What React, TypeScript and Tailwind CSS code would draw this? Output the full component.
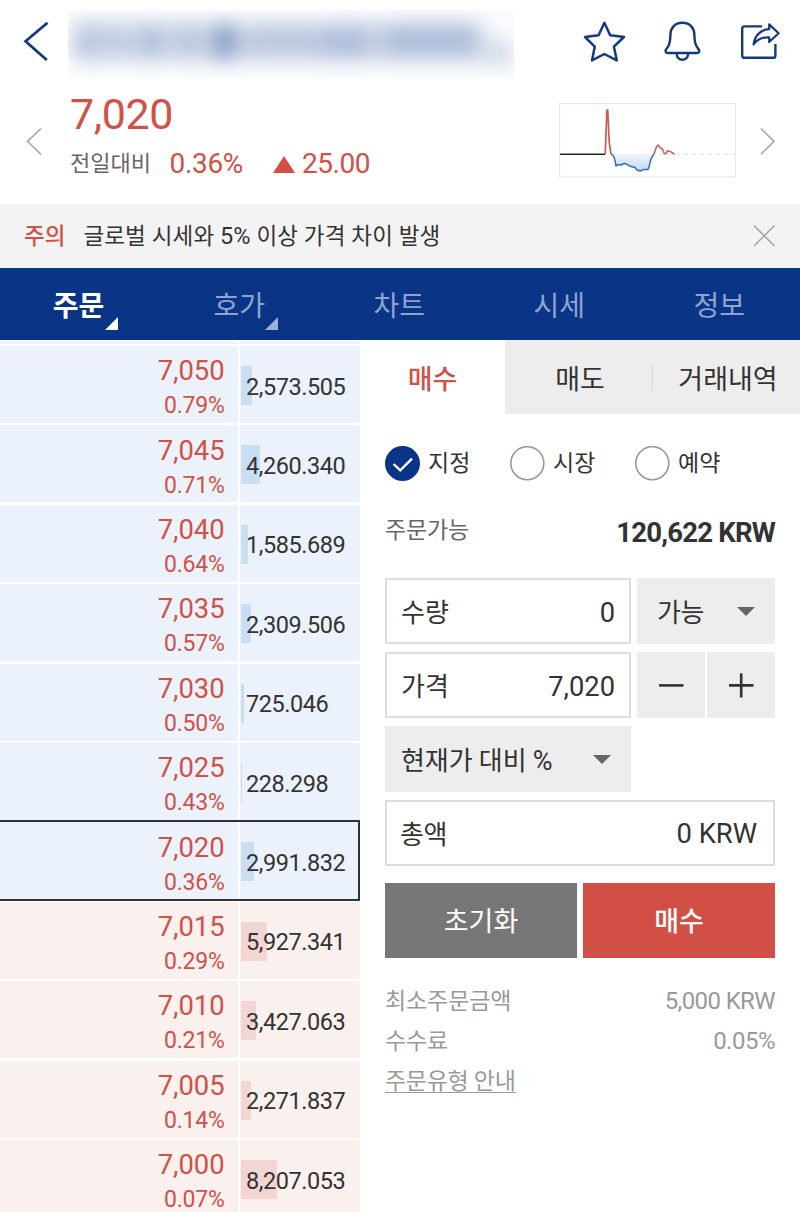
import clsx from 'clsx';

type Side = 'ask' | 'bid';

interface OrderRow {
  price: string;
  rate: string;
  qty: string;
  side: Side;
  current?: boolean;
}

const orderBook: OrderRow[] = [
  { price: '7,050', rate: '0.79%', qty: '2,573.505', side: 'ask' },
  { price: '7,045', rate: '0.71%', qty: '4,260.340', side: 'ask' },
  { price: '7,040', rate: '0.64%', qty: '1,585.689', side: 'ask' },
  { price: '7,035', rate: '0.57%', qty: '2,309.506', side: 'ask' },
  { price: '7,030', rate: '0.50%', qty: '725.046', side: 'ask' },
  { price: '7,025', rate: '0.43%', qty: '228.298', side: 'ask' },
  { price: '7,020', rate: '0.36%', qty: '2,991.832', side: 'ask', current: true },
  { price: '7,015', rate: '0.29%', qty: '5,927.341', side: 'bid' },
  { price: '7,010', rate: '0.21%', qty: '3,427.063', side: 'bid' },
  { price: '7,005', rate: '0.14%', qty: '2,271.837', side: 'bid' },
  { price: '7,000', rate: '0.07%', qty: '8,207.053', side: 'bid' },
];

const navTabs = [
  { label: '주문', hasMenu: true },
  { label: '호가', hasMenu: true },
  { label: '차트', hasMenu: false },
  { label: '시세', hasMenu: false },
  { label: '정보', hasMenu: false },
];

const orderTypes = ['지정', '시장', '예약'];

// Coin name is masked
function MaskedTitle() {
  return (
    <svg width="446" height="68" viewBox="68 10 446 68" className="block">
      <defs>
        <filter id="mask-blur" x="-20%" y="-80%" width="140%" height="260%">
          <feGaussianBlur stdDeviation="9.5" />
        </filter>
      </defs>
      <rect x="68" y="10" width="446" height="68" fill="#fcfcfe" />
      <g filter="url(#mask-blur)">
        <rect x="72" y="22" width="412" height="39" fill="#cad4e6" />
        <rect x="78" y="25" width="20" height="33" fill="#b8c6de" />
        <rect x="108" y="25" width="16" height="31" fill="#becbe1" />
        <rect x="141" y="25" width="20" height="33" fill="#aebfda" />
        <rect x="181" y="25" width="16" height="33" fill="#b3c3dc" />
        <rect x="213" y="24" width="23" height="36" fill="#86a0c9" />
        <rect x="250" y="27" width="70" height="29" fill="#bbc8df" />
        <rect x="322" y="25" width="46" height="33" fill="#b1bfdb" />
        <rect x="385" y="25" width="90" height="31" fill="#aebdd9" />
        <rect x="486" y="40" width="26" height="26" fill="#d3dbea" />
      </g>
    </svg>
  );
}

function StarIcon() {
  return (
    <svg width="44" height="44" viewBox="582 20 44 44" fill="none" stroke="#15397f" strokeWidth="2.5" strokeLinejoin="round">
      <path d="M604.4 22.8 L610.2 35.2 L624 37 L613.9 46.6 L616.8 60.4 L604.4 54 L592 60.4 L594.8 46.6 L585 37 L598.6 35.2 Z" />
    </svg>
  );
}

function BellIcon() {
  return (
    <svg width="40" height="44" viewBox="662 20 40 44" fill="none" stroke="#15397f" strokeWidth="2.4" strokeLinejoin="round">
      <path d="M682.4 22.8 C674.6 22.8 670.4 28.4 670.4 35 C670.4 42.4 669.6 45.4 666.6 48.6 C664.8 50.6 665.4 53 668 53 H696.8 C699.4 53 700 50.6 698.2 48.6 C695.2 45.4 694.4 42.4 694.4 35 C694.4 28.4 690.2 22.8 682.4 22.8 Z" />
      <path d="M676.6 53.4 C676.8 57.4 679.2 59.8 682.4 59.8 C685.6 59.8 688 57.4 688.2 53.4" />
    </svg>
  );
}

function ShareIcon() {
  return (
    <svg width="44" height="44" viewBox="738 20 44 44" fill="none" stroke="#15397f" strokeWidth="2.4" strokeLinejoin="round">
      <path d="M762 26.4 H744.6 Q742.2 26.4 742.2 28.8 V55.4 Q742.2 57.8 744.6 57.8 H773 Q775.4 57.8 775.4 55.4 V44" />
      <path strokeWidth="2.2" d="M769.2 24.4 L778.6 33.3 L769.2 42 V37.4 C762.6 37 757.2 39.2 753.6 44.4 C754.8 35.6 760.6 29.6 769.2 29.2 Z" />
    </svg>
  );
}

function Header() {
  return (
    <header className="flex h-[84px] items-start justify-between pl-[23px] pr-[18px]">
      <div className="flex">
        <svg width="45" height="84" viewBox="23 0 45 84" fill="none" stroke="#15397f" strokeWidth="2.8">
          <path d="M47.5 22.8 L25.6 41.2 L46.8 60" />
        </svg>
        <div className="pt-[10px]">
          <MaskedTitle />
        </div>
      </div>
      <div className="flex pt-5">
        <StarIcon />
        <div className="w-9" />
        <BellIcon />
        <div className="w-9" />
        <ShareIcon />
      </div>
    </header>
  );
}

function MiniChart() {
  return (
    <svg width="178" height="76" viewBox="558 102 178 76" fill="none">
      <defs>
        <linearGradient id="dip" x1="0" y1="0" x2="0" y2="1">
          <stop offset="0" stopColor="#eff4fb" />
          <stop offset="1" stopColor="#c3d8f0" />
        </linearGradient>
      </defs>
      <rect x="559.5" y="103.5" width="176" height="73.5" fill="#fff" stroke="#e8e8e8" strokeWidth="1.2" />
      <path d="M612 154.3 H735" stroke="#e6e6e6" strokeWidth="1.2" strokeDasharray="4 4" />
      <path
        d="M611 154.3 C614 154.5 614.6 158 616 166 L618 164.6 L621 165 L624 163.3 L627 164.4 L631 166.6 L635 167.4 L637 170 L640 171 L644 169.4 L648 169.4 L650 163 L654 154.3 Z"
        fill="url(#dip)"
      />
      <path d="M560 154.3 H605" stroke="#222" strokeWidth="1.5" />
      <path d="M605.2 154.3 L606.9 110 H607.7 L609.2 142 L611 154.3" stroke="#cc5b51" strokeWidth="1.7" strokeLinejoin="round" />
      <path
        d="M611 154.3 C614 154.5 614.6 158 616 166 L618 164.6 L621 165 L624 163.3 L627 164.4 L631 166.6 L635 167.4 L637 170 L640 171 L644 169.4 L648 169.4 C650 167 649.6 158 654 154.3"
        stroke="#2f6cb8"
        strokeWidth="1.5"
        strokeLinejoin="round"
      />
      <path
        d="M654 154.3 L656.6 146.6 L658.2 145 L660 147.6 L662.4 149 L664.4 153.8 L666 153.4 L667.6 150.8 L670.6 151.6 L674.6 154.3"
        stroke="#cc5b51"
        strokeWidth="1.5"
        strokeLinejoin="round"
      />
    </svg>
  );
}

function PriceSummary() {
  return (
    <section className="flex h-[120px] items-start pl-[26px] pr-6">
      <svg width="16" height="30" viewBox="26 126 16 30" fill="none" stroke="#a9a9a9" strokeWidth="1.6" className="mt-[42px]">
        <path d="M41 128.5 L27.5 141.3 L41 154.3" />
      </svg>
      <div className="ml-7 flex-1 text-[#d05147]">
        <div className="mt-[5px] text-[43px] leading-[50px] tracking-[-0.4px]">7,020</div>
        <div className="mt-[9px] flex items-center leading-8">
          <span className="text-[22px] text-[#666]">전일대비</span>
          <span className="ml-[18.5px] text-[28px] tracking-[-0.3px]">0.36%</span>
          <span className="ml-[30px] h-0 w-0 border-x-[11.5px] border-b-[17px] border-x-transparent border-b-[#d24f45]" />
          <span className="ml-[7px] text-[28px] tracking-[-0.5px]">25.00</span>
        </div>
      </div>
      <div className="mt-[18px]">
        <MiniChart />
      </div>
      <svg width="16" height="30" viewBox="759 126 16 30" fill="none" stroke="#a9a9a9" strokeWidth="1.6" className="ml-6 mt-[42px]">
        <path d="M759.8 128.5 L773.1 141.3 L759.8 154.3" />
      </svg>
    </section>
  );
}

function Notice() {
  return (
    <div className="flex h-16 items-center bg-[#f3f3f3] pl-6 pr-6 text-[22.5px] text-[#333]">
      <span className="pt-[2px] font-medium text-[#d05147]">주의</span>
      <span className="ml-[18px] flex-1 pt-[2px] tracking-[0.15px]">
        글로벌 시세와 <span className="text-[23.5px]">5%</span> 이상 가격 차이 발생
      </span>
      <svg width="24" height="24" viewBox="0 0 24 24" fill="none" stroke="#a0a0a0" strokeWidth="1.4">
        <path d="M2 1.5 L22.5 22 M22.5 1.5 L2 22" />
      </svg>
    </div>
  );
}

function NavTabs() {
  return (
    <nav className="grid h-[72px] grid-cols-5 bg-[#0a3586] text-[28px]">
      {navTabs.map((tab, i) => (
        <button
          key={tab.label}
          className={clsx('relative pt-[5px]', i === 0 ? 'pr-[3px] font-bold text-white' : 'pr-[1.5px] text-[#8fa3d0]')}
        >
          {tab.label}
          {tab.hasMenu && (
            <svg width="13" height="13" viewBox="0 0 13 13" className="absolute left-[105px] top-[49px]">
              <path d="M13 0 V13 H0 Z" fill={i === 0 ? '#fff' : '#9db0d9'} />
            </svg>
          )}
        </button>
      ))}
    </nav>
  );
}

function OrderBookRow({ row }: { row: OrderRow }) {
  const cell = row.side === 'ask' ? 'bg-[#ebf2fb]' : 'bg-[#faf0ee]';
  const bar = row.side === 'ask' ? 'bg-[#c9def1]' : 'bg-[#f3d6d3]';
  const barWidth = parseFloat(row.qty.replace(',', '')) / 226;

  return (
    <div className="relative flex h-[77.1px] shrink-0 gap-[2px]">
      <div className={clsx('flex w-[238px] flex-col items-end pr-[13.4px] pt-[8.3px] text-[#d05147]', cell)}>
        <span className="text-[27.4px] leading-[35px]">{row.price}</span>
        <span className="text-[23px] leading-[34px] tracking-[-0.2px]">{row.rate}</span>
      </div>
      <div className={clsx('relative flex flex-1 items-center pl-[6px] pt-[5.4px]', cell)}>
        <div className={clsx('absolute left-[1px] top-5 h-[39px]', bar)} style={{ width: barWidth }} />
        <span className="relative text-[23.5px] tracking-[-0.45px] text-[#333]">{row.qty}</span>
      </div>
      {row.current && (
        <div className="absolute inset-x-0 -bottom-[2px] -top-[2px] border-y-2 border-r-2 border-[#2f3337]" />
      )}
    </div>
  );
}

function OrderBook() {
  return (
    <div className="flex w-[360px] shrink-0 flex-col gap-[2.3px] overflow-hidden pt-[2px]">
      <div className="flex h-[1.7px] shrink-0 gap-[2px]">
        <div className="w-[238px] bg-[#ebf2fb]" />
        <div className="flex-1 bg-[#ebf2fb]" />
      </div>
      {orderBook.map((row) => (
        <OrderBookRow key={row.price} row={row} />
      ))}
    </div>
  );
}

function Caret() {
  return <span className="h-0 w-0 border-x-[9.5px] border-t-[9.5px] border-x-transparent border-t-[#666]" />;
}

function OrderForm() {
  return (
    <div className="flex-1">
      <div className="flex h-[74px] text-[27px] text-[#333]">
        <button className="w-[145px] pt-[6px] font-medium text-[#d05147]">매수</button>
        <div className="flex flex-1 items-center bg-[#ededed]">
          <button className="flex-1 pl-[3px] pt-[6px]">매도</button>
          <div className="h-7 w-px bg-[#d8d8d8]" />
          <button className="flex-1 pl-[3px] pt-[6px]">거래내역</button>
        </div>
      </div>

      <div className="px-[25px] text-[#333]">
        <div className="mt-[31px] flex h-9 items-center">
          {orderTypes.map((type, i) => (
            <label key={type} className="flex w-[125px] items-center gap-[8px] text-[23px]">
              {i === 0 ? (
                <svg width="35" height="35" viewBox="0 0 35 35" fill="none">
                  <circle cx="17.5" cy="17.5" r="17.5" fill="#0a3586" />
                  <path d="M8.6 18 L15.2 24.4 L27 12.6" stroke="#fff" strokeWidth="2.4" />
                </svg>
              ) : (
                <svg width="35" height="35" viewBox="0 0 35 35" fill="none">
                  <circle cx="17.3" cy="17.2" r="16.5" stroke="#999" strokeWidth="1.6" />
                </svg>
              )}
              <span className="pt-[3px]">{type}</span>
            </label>
          ))}
        </div>

        <div className="mt-8 flex h-10 items-center justify-between">
          <span className="-mt-1 text-[23px] tracking-[-0.2px] text-[#666]">주문가능</span>
          <span className="text-[27.5px] font-bold tracking-[-0.8px]">120,622 KRW</span>
        </div>

        <div className="mt-[25px] flex flex-col gap-2 text-[26px]">
          <div className="flex h-[66px] gap-[6px]">
            <div className="flex w-[246px] items-center justify-between border-2 border-[#ddd] px-[14px] pt-1">
              <span>수량</span>
              <span className="text-[27.3px]">0</span>
            </div>
            <div className="flex flex-1 items-center justify-between bg-[#ededed] pl-5 pr-5">
              <span className="pt-1 tracking-[-0.4px]">가능</span>
              <Caret />
            </div>
          </div>
          <div className="flex h-[66px] gap-[6px]">
            <div className="flex w-[246px] items-center justify-between border-2 border-[#ddd] px-[14px] pt-1">
              <span>가격</span>
              <span className="text-[27.3px]">7,020</span>
            </div>
            <div className="flex flex-1 gap-[2px]">
              <button className="flex flex-1 items-center justify-center bg-[#ededed]">
                <svg width="26" height="26" viewBox="0 0 26 26" stroke="#333" strokeWidth="2.6">
                  <path d="M1 13.4 H25.5" />
                </svg>
              </button>
              <button className="flex flex-1 items-center justify-center bg-[#ededed]">
                <svg width="26" height="26" viewBox="0 0 26 26" stroke="#333" strokeWidth="2.6">
                  <path d="M1 13.4 H25.5 M13.2 1.2 V25.6" />
                </svg>
              </button>
            </div>
          </div>
          <div className="flex h-[66px] w-[246px] items-center justify-between bg-[#ededed] pl-4 pr-5">
            <span className="pt-1 tracking-[-0.1px]">
              현재가 대비 <span className="text-[27px]">%</span>
            </span>
            <Caret />
          </div>
          <div className="flex h-[66px] items-center justify-between border-2 border-[#ddd] pl-[13px] pr-4 pt-1">
            <span className="tracking-[-0.5px]">총액</span>
            <span className="text-[27.4px]">0 KRW</span>
          </div>
        </div>

        <div className="mt-[17px] flex h-[75px] gap-[6px] text-[27px] text-white">
          <button className="flex-1 bg-[#777] pt-1">초기화</button>
          <button className="flex-1 bg-[#d24f45] pt-1 font-medium">매수</button>
        </div>

        <div className="mt-[23px] text-[23px] leading-10 text-[#999]">
          <div className="flex justify-between">
            <span className="pt-px tracking-[-0.1px]">최소주문금액</span>
            <span className="text-[24px] tracking-[-0.6px]">5,000 KRW</span>
          </div>
          <div className="-mt-px flex justify-between">
            <span className="pt-px tracking-[-0.1px]">수수료</span>
            <span className="text-[24px] tracking-[-0.5px]">0.05%</span>
          </div>
          <a className="inline-block h-[23px] border-b-[1.5px] border-[#999] leading-[24px] tracking-[-0.3px]">주문유형 안내</a>
        </div>
      </div>
    </div>
  );
}

export default function App() {
  return (
    <div className="flex h-[1212px] w-[800px] flex-col overflow-hidden bg-white font-[Roboto,'Noto_Sans_CJK_KR',sans-serif]">
      <Header />
      <PriceSummary />
      <Notice />
      <NavTabs />
      <div className="flex min-h-0 flex-1">
        <OrderBook />
        <OrderForm />
      </div>
    </div>
  );
}
